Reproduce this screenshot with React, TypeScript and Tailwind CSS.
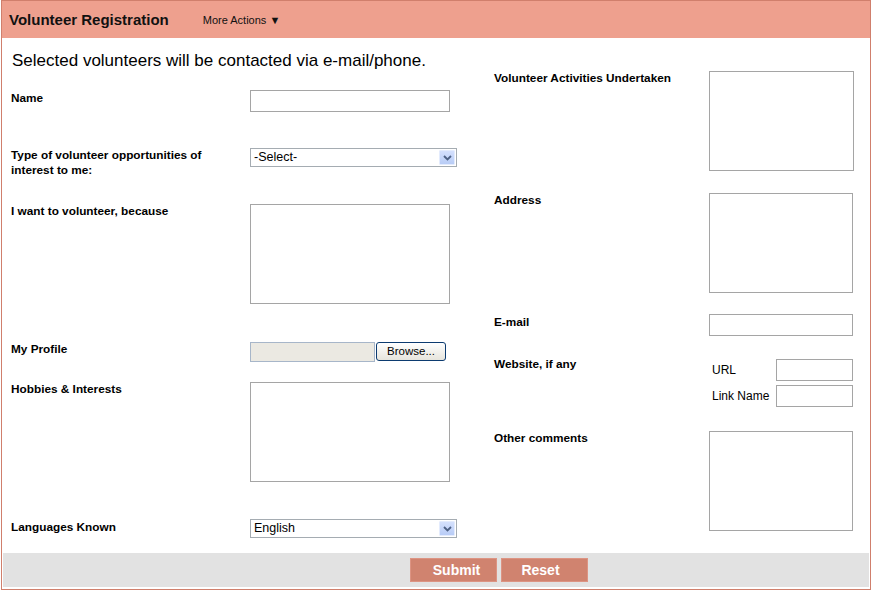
import React from "react";

function FakeSelect({ value }: { value: string }) {
  return (
    <div className="relative flex h-[19px] w-[207px] items-center border border-[#a5acb2] bg-white pl-[3px] text-[12.5px] font-normal leading-none text-black">
      <span>{value}</span>
      <div className="absolute right-[1px] top-[1px] flex h-[15px] w-[16px] items-center justify-center rounded-[1px] border border-[#e3ebfd] bg-gradient-to-b from-[#d4e0fd] to-[#b8ccf6]">
        <svg width="9" height="6" viewBox="0 0 9 6">
          <path d="M1 1 L4.5 4.5 L8 1" fill="none" stroke="#4d6185" strokeWidth="1.8" />
        </svg>
      </div>
    </div>
  );
}

const box = "border border-[#a5a5a5] bg-white outline-none resize-none block";

export default function App() {
  return (
    <div className="font-['Liberation_Sans',Arial,sans-serif] text-black">
      <div className="ml-[1px] flex h-[590px] w-[870px] flex-col border border-[#d07f6c] bg-white">
        {/* header */}
        <div className="flex h-[37px] shrink-0 items-center bg-[#eea08e] pl-[7px] pt-[1px]">
          <span className="text-[15px] font-bold text-[#111]">Volunteer Registration</span>
          <span className="ml-[34px] text-[11px] text-[#111]">More Actions ▼</span>
        </div>

        {/* content */}
        <div className="flex flex-1">
          {/* left column */}
          <div className="w-[492px] pl-[9px]">
            <div className="ml-[1px] mt-[13px] text-[17px] leading-[19px]">
              Selected volunteers will be contacted via e-mail/phone.
            </div>
            <div className="mt-[20px] flex flex-col text-[11.8px] font-bold leading-[15px]">
              <div className="flex h-[58px]">
                <div className="w-[239px] pt-[1px]">Name</div>
                <input className={`${box} h-[22px] w-[200px]`} />
              </div>
              <div className="flex h-[56px]">
                <div className="w-[239px]">
                  Type of volunteer opportunities of
                  <br />
                  interest to me:
                </div>
                <FakeSelect value="-Select-" />
              </div>
              <div className="flex h-[138px]">
                <div className="w-[239px]">I want to volunteer, because</div>
                <textarea className={`${box} h-[100px] w-[200px]`} />
              </div>
              <div className="flex h-[40px]">
                <div className="w-[239px]">My Profile</div>
                <div className="flex h-[20px]">
                  <div className="h-[20px] w-[125px] border border-[#a7b6c9] bg-[#ebe9e2]" />
                  <div className="ml-[1px] flex h-[19px] w-[70px] items-center justify-center rounded-[3px] border border-[#0c3b70] bg-gradient-to-b from-[#ffffff] to-[#e6e4dc] text-[11.5px] font-normal leading-none">
                    Browse...
                  </div>
                </div>
              </div>
              <div className="flex h-[137px]">
                <div className="w-[239px]">Hobbies &amp; Interests</div>
                <textarea className={`${box} h-[100px] w-[200px]`} />
              </div>
              <div className="flex h-[30px]">
                <div className="w-[239px] pt-[1px]">Languages Known</div>
                <FakeSelect value="English" />
              </div>
            </div>
          </div>

          {/* right column */}
          <div className="flex flex-col pt-[33px] text-[11.8px] font-bold leading-[15px]">
            <div className="flex h-[122px]">
              <div className="w-[215px]">Volunteer Activities Undertaken</div>
              <textarea className={`${box} h-[100px] w-[145px]`} />
            </div>
            <div className="flex h-[121px]">
              <div className="w-[215px]">Address</div>
              <textarea className={`${box} h-[100px] w-[144px]`} />
            </div>
            <div className="flex h-[45px]">
              <div className="w-[215px] pt-[1px]">E-mail</div>
              <input className={`${box} h-[22px] w-[144px]`} />
            </div>
            <div className="flex h-[72px]">
              <div className="-mt-[2px] w-[215px]">Website, if any</div>
              <div className="flex flex-col gap-[4px] text-[12px] font-normal leading-[14px]">
                <div className="flex items-center">
                  <div className="w-[67px] pl-[3px]">URL</div>
                  <input className={`${box} h-[22px] w-[77px]`} />
                </div>
                <div className="flex items-center">
                  <div className="w-[67px] pl-[3px]">Link Name</div>
                  <input className={`${box} h-[22px] w-[77px]`} />
                </div>
              </div>
            </div>
            <div className="flex">
              <div className="w-[215px]">Other comments</div>
              <textarea className={`${box} h-[100px] w-[144px]`} />
            </div>
          </div>
        </div>

        {/* footer */}
        <div className="mx-[1px] mb-[2px] flex h-[34px] shrink-0 items-center gap-[4px] bg-[#e2e2e2] pl-[407px]">
          <div className="flex h-[24px] w-[87px] items-center justify-center border border-[#dd9483] bg-[#d0836f] pl-[6px] text-[14px] font-bold text-white">
            Submit
          </div>
          <div className="flex h-[24px] w-[87px] items-center justify-center border border-[#dd9483] bg-[#d0836f] pr-[8px] text-[14px] font-bold text-white">
            Reset
          </div>
        </div>
      </div>
    </div>
  );
}
